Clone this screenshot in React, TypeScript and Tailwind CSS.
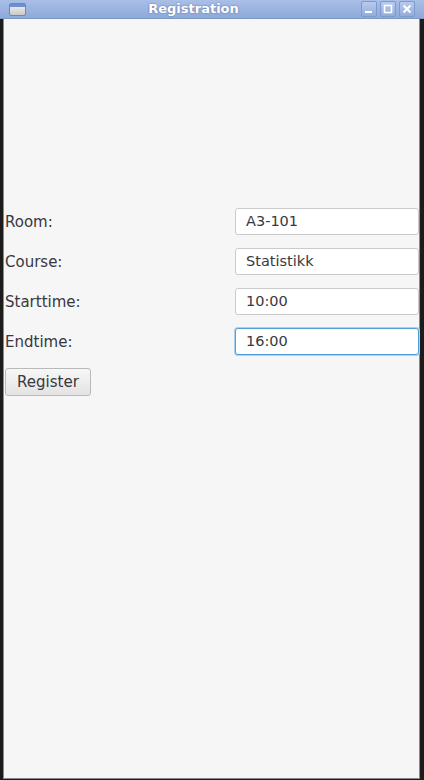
import React from "react";

const font = { fontFamily: '"DejaVu Sans", "Liberation Sans", sans-serif' };

function TitleButton({ kind }: { kind: "min" | "max" | "close" }) {
  return (
    <div className="flex h-[16px] w-[16px] items-center justify-center rounded-[2px] border border-[#7f99c8] bg-gradient-to-b from-[#b9cbee] to-[#93acdb]">
      <svg width="10" height="10" viewBox="0 0 10 10">
        {kind === "min" && <rect x="1" y="7" width="7" height="2" fill="#ffffff" />}
        {kind === "max" && (
          <rect x="1.5" y="1.5" width="7" height="7" fill="none" stroke="#ffffff" strokeWidth="1.6" />
        )}
        {kind === "close" && (
          <path d="M1.5 1.5 L8.5 8.5 M8.5 1.5 L1.5 8.5" stroke="#ffffff" strokeWidth="2" />
        )}
      </svg>
    </div>
  );
}

function Field({ value, focused }: { value: string; focused?: boolean }) {
  return (
    <div
      className={`flex h-[27px] w-[184px] items-center rounded-[3px] bg-white pl-[10px] text-[14.5px] text-[#383840] ${
        focused
          ? "border border-[#4a9fdc] shadow-[0_0_0_1px_#a9d2f0]"
          : "border border-[#cbcbcb]"
      }`}
    >
      {value}
    </div>
  );
}

const rows = [
  { label: "Room:", value: "A3-101" },
  { label: "Course:", value: "Statistikk" },
  { label: "Starttime:", value: "10:00" },
  { label: "Endtime:", value: "16:00", focused: true },
];

export default function App() {
  return (
    <div className="flex h-[780px] w-[424px] flex-col bg-[#1c1c1c]" style={font}>
      {/* Title bar */}
      <div className="relative flex h-[19px] items-center border-b border-[#7c96c6] bg-gradient-to-b from-[#a9bfe8] to-[#8ea9d9] px-[9px]">
        <div className="h-[13px] w-[17px] rounded-[2px] border border-[#6f86b3] bg-gradient-to-b from-[#f4f4f4] to-[#c9c9c9]">
          <div className="h-[3px] bg-[#6f8fd0]" />
        </div>
        <div className="flex-1 text-center text-[13px] font-bold text-white [text-shadow:0_0_2px_#55698f]">
          Registration
        </div>
        <div className="flex gap-[3px]">
          <TitleButton kind="min" />
          <TitleButton kind="max" />
          <TitleButton kind="close" />
        </div>
      </div>

      {/* Window body */}
      <div className="ml-[3px] mr-[4px] mb-[1px] flex flex-1 flex-col border-l border-r border-b border-[#8a8a8a] bg-[#f6f6f6] pl-[1px] pt-[189px] text-[15px] text-[#383840]">
        <div className="flex flex-col gap-[13px]">
          {rows.map((r) => (
            <div key={r.label} className="flex h-[27px] items-center justify-between">
              <span className="pt-[1px]">{r.label}</span>
              <Field value={r.value} focused={r.focused} />
            </div>
          ))}
          <button className="h-[28px] w-[86px] rounded-[3px] border border-[#b9b9b9] bg-gradient-to-b from-[#f7f7f7] to-[#e3e3e3] text-[15px] text-[#383840]">
            Register
          </button>
        </div>
      </div>
    </div>
  );
}
